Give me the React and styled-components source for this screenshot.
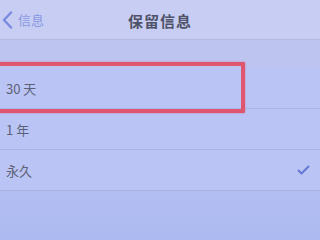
import styled, { createGlobalStyle } from 'styled-components';

const Global = createGlobalStyle`
  html, body { margin: 0; padding: 0; }
  body {
    width: 320px;
    height: 240px;
    overflow: hidden;
    font-family: "Noto Sans CJK SC", "Noto Sans", sans-serif;
    background: linear-gradient(180deg, #c4cbf2 0%, #b7c2f3 60%, #adbaf1 100%);
  }
`;

const Screen = styled.div`
  position: relative;
  width: 320px;
  height: 240px;
  display: flex;
  flex-direction: column;
`;

const NavBar = styled.div`
  height: 39px;
  display: grid;
  grid-template-columns: 1fr auto 1fr;
  align-items: center;
  background: #c8cef3;
  border-bottom: 1px solid #b3b9e2;
`;

const Back = styled.div`
  display: flex;
  align-items: center;
  gap: 5px;
  padding-left: 2px;
  color: #7d8fe0;
  font-size: 13px;
  opacity: 0.85;
`;

const Title = styled.div`
  font-size: 15px;
  font-weight: 700;
  letter-spacing: 1px;
  color: #4f5268;
  padding-top: 2px;
`;

const Gap = styled.div`
  height: 28px;
  background: #bdc4ef;
`;

const List = styled.div`
  display: flex;
  flex-direction: column;
  background: #bac5f5;
  border-bottom: 1px solid #a8b2e4;
`;

const Row = styled.div`
  height: 40px;
  display: flex;
  align-items: center;
  justify-content: space-between;
  padding: 0 10px 0 6px;
  font-size: 13px;
  color: #5d6177;
  border-bottom: ${p => (p.$last ? 'none' : '1px solid #abb5e6')};
`;

const Highlight = styled.div`
  position: absolute;
  left: -6px;
  top: 62px;
  width: 243px;
  height: 43px;
  border: 4px solid #df5670;
  border-radius: 1px;
  box-shadow: 0 0 2px rgba(223, 86, 112, 0.7);
`;

function Chevron() {
  return (
    <svg width="11" height="18" viewBox="0 0 11 18">
      <path d="M9 1.5 L2 9 L9 16.5" fill="none" stroke="#6b80db" strokeWidth="2.4" strokeLinecap="round" strokeLinejoin="round" />
    </svg>
  );
}

function Check() {
  return (
    <svg width="13" height="10" viewBox="0 0 13 10">
      <path d="M1.5 5.5 L4.5 8.5 L11.5 1.5" fill="none" stroke="#6578d4" strokeWidth="2" strokeLinecap="round" strokeLinejoin="round" />
    </svg>
  );
}

export default function App() {
  return (
    <>
      <Global />
      <Screen>
        <NavBar>
          <Back>
            <Chevron />
            <span>信息</span>
          </Back>
          <Title>保留信息</Title>
          <div />
        </NavBar>
        <Gap />
        <List>
          <Row>30 天</Row>
          <Row>1 年</Row>
          <Row $last>
            永久
            <Check />
          </Row>
        </List>
        <Highlight />
      </Screen>
    </>
  );
}
